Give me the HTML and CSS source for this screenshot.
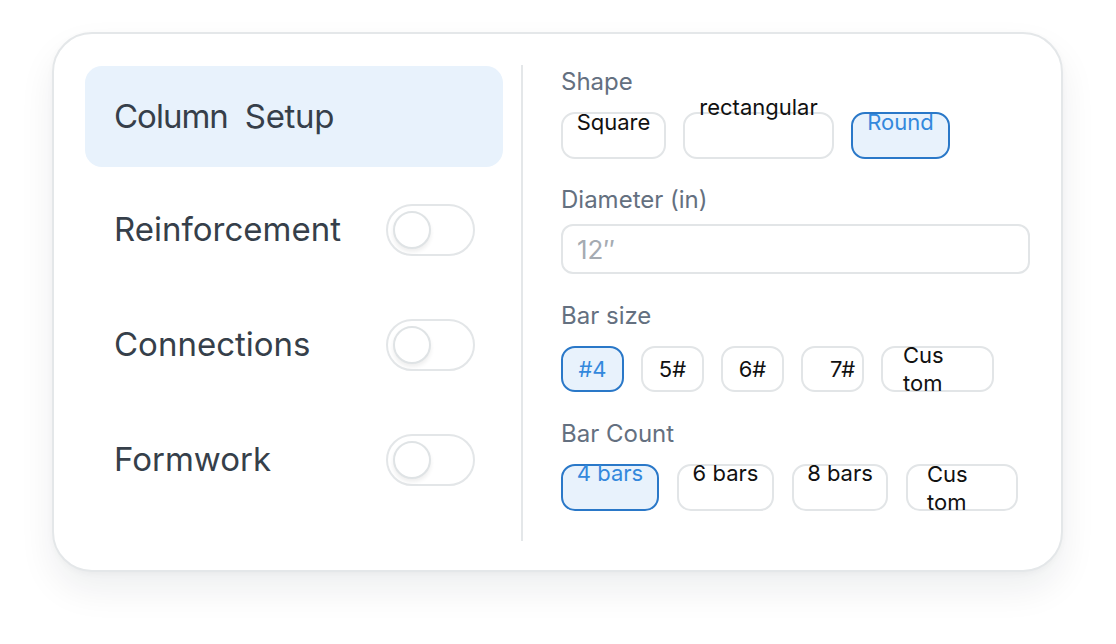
FILE: index.html
```html
<!DOCTYPE html>
<html>
<head>
<meta charset="utf-8">
<link rel="stylesheet" href="styles.css">
</head>
<body>
<div class="card">
  <div class="nav">
    <div class="nav-item active"><span class="nav-label w-col">Column</span><span class="nav-label w-set">Setup</span></div>
    <div class="nav-row first"><span class="nav-label">Reinforcement</span><span class="toggle"><span class="knob"></span></span></div>
    <div class="nav-row"><span class="nav-label">Connections</span><span class="toggle"><span class="knob"></span></span></div>
    <div class="nav-row"><span class="nav-label">Formwork</span><span class="toggle"><span class="knob"></span></span></div>
  </div>
  <div class="divider"></div>
  <div class="form">
    <div class="label">Shape</div>
    <div class="chips shape">
      <div class="chip w105"><span class="t top">Square</span></div>
      <div class="chip w151"><span class="t up">rectangular</span></div>
      <div class="chip w99 on"><span class="t top">Round</span></div>
    </div>
    <div class="label l-diam">Diameter (in)</div>
    <div class="input">12″</div>
    <div class="label">Bar size</div>
    <div class="chips size">
      <div class="chip w63 on mid"><span class="t">#4</span></div>
      <div class="chip w63 mid"><span class="t">5#</span></div>
      <div class="chip w63 mid"><span class="t">6#</span></div>
      <div class="chip w63 mid"><span class="t shift">7#</span></div>
      <div class="chip w113 mid left"><span class="t two">Cus<br>tom</span></div>
    </div>
    <div class="label">Bar Count</div>
    <div class="chips count">
      <div class="chip w98 on"><span class="t hi">4 bars</span></div>
      <div class="chip w97"><span class="t hi">6 bars</span></div>
      <div class="chip w96"><span class="t hi">8 bars</span></div>
      <div class="chip w112 mid left tight"><span class="t two">Cus<br>tom</span></div>
    </div>
  </div>
</div>
</body>
</html>
```
FILE: styles.css
```css
* { box-sizing: border-box; }
html, body { margin: 0; padding: 0; background: #ffffff; }
body { font-family: Inter, "Noto Sans", sans-serif; min-height: 644px; padding-top: 32px; }

.card {
  margin: 0 0 0 52px;
  width: 1011px;
  height: 540px;
  border: 2px solid #e4e7e9;
  border-radius: 40px;
  background: #fff;
  box-shadow: 0 18px 36px rgba(20, 30, 40, 0.07), 0 2px 6px rgba(20, 30, 40, 0.03);
  display: flex;
  align-items: flex-start;
  padding: 0 0 0 31px;
}

.nav { width: 418px; margin-top: 32px; display: flex; flex-direction: column; }
.nav-item {
  height: 101px;
  border-radius: 17px;
  background: #e8f2fc;
  display: flex;
  align-items: center;
  gap: 17px;
  padding-left: 29px;
  padding-bottom: 2px;
}
.nav-item .w-col { letter-spacing: -1px; }
.nav-item .w-set { letter-spacing: -0.3px; }
.nav-label { font-size: 33px; color: #363f4a; }
.nav-row {
  height: 115px;
  display: flex;
  align-items: center;
  justify-content: space-between;
  padding: 0 28px 0 29px;
}
.nav-row .nav-label { margin-top: -2px; }
.nav-row.first { margin-top: 5px; }

.toggle {
  width: 89px;
  height: 52px;
  border: 2px solid #e3e6e8;
  border-radius: 26px;
  display: flex;
  align-items: center;
  padding-left: 5px;
  background: #fff;
}
.knob {
  width: 38px;
  height: 38px;
  border-radius: 50%;
  border: 2px solid #dfe3e5;
  background: #fff;
  box-shadow: 0 3px 4px rgba(0, 0, 0, 0.07);
}

.divider { width: 2px; height: 476px; background: #e4e7e9; margin: 31px 0 0 18px; }

.form { margin-left: 38px; padding-top: 34px; width: 470px; }
.label { font-size: 24px; line-height: 28px; color: #647080; margin-bottom: 16px; }
.l-diam { margin-top: 27px; margin-bottom: 10px; }
.size + .label, .input + .label { margin-top: 28px; }

.chips { display: flex; gap: 17px; }
.chips.count { gap: 18px; }
.chip {
  height: 47px;
  border: 2px solid #e2e5e7;
  border-radius: 14px;
  display: flex;
  justify-content: center;
  align-items: flex-start;
  font-size: 22px;
  color: #111;
  background: #fff;
}
.size .chip { height: 46px; }
.chip.mid { align-items: center; }
.chip.left { justify-content: flex-start; padding-left: 20px; }
.chip.left.tight { padding-left: 19px; }
.chip.on { border-color: #2a78c8; background: #e8f2fc; color: #3388dc; }
.t { display: block; line-height: 25px; white-space: nowrap; }
.t.top { margin-top: -4px; }
.t.up { margin-top: -19px; }
.t.hi { margin-top: -5px; }
.t.two { line-height: 28px; }
.t.shift { margin-left: 20px; }

.w105 { width: 105px; } .w151 { width: 151px; } .w99 { width: 99px; }
.w63 { width: 63px; } .w113 { width: 113px; }
.w98 { width: 98px; } .w97 { width: 97px; } .w96 { width: 96px; } .w112 { width: 112px; }

.input {
  width: 469px;
  height: 50px;
  border: 2px solid #e2e5e7;
  border-radius: 12px;
  display: flex;
  align-items: center;
  padding-left: 14px;
  font-size: 26px;
  color: #a5abb2;
}
```
